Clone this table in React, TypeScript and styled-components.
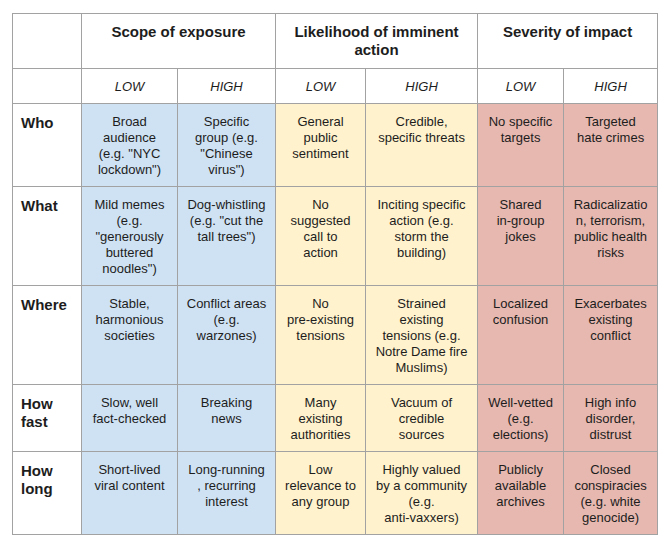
import React from "react";
import styled, { createGlobalStyle, css } from "styled-components";

const GlobalStyle = createGlobalStyle`
  html, body { margin: 0; padding: 0; background: #ffffff; }
  body { font-family: "Liberation Sans", Arial, Helvetica, sans-serif; color: #1d1d1d; }
`;

type Tone = "none" | "blue" | "yellow" | "red";

const toneBg: Record<Tone, string> = {
  none: "#ffffff",
  blue: "#cfe2f3",
  yellow: "#fff2cc",
  red: "#e6b8af",
};

const LINE = "#a2a2a2";

const Page = styled.main`
  padding: 13px 0 0 12px;
`;

const Table = styled.table`
  border-collapse: separate;
  border-spacing: 0;
  table-layout: fixed;
  width: 646px;
  border-top: 1px solid ${LINE};
  border-left: 1px solid ${LINE};
  font-family: "Liberation Sans", Arial, Helvetica, sans-serif;
  color: #1d1d1d;
`;

const Col = styled.col<{ $w: number }>`
  width: ${(p) => p.$w}px;
`;

const cellBase = css`
  box-sizing: border-box;
  border-right: 1px solid ${LINE};
  border-bottom: 1px solid ${LINE};
  vertical-align: top;
  overflow-wrap: break-word;
`;

const GroupHeader = styled.th`
  ${cellBase}
  padding: 9px 8.6px 9px;
  font-size: 15px;
  line-height: 18px;
  font-weight: bold;
  text-align: center;
  background: #ffffff;
`;

const EmptyHeader = styled.td`
  ${cellBase}
  padding: 10px 8px 8px;
  background: #ffffff;
`;

const LevelHeader = styled.th`
  ${cellBase}
  padding: 10px 8.6px 8px;
  font-size: 13px;
  line-height: 16px;
  font-weight: normal;
  font-style: italic;
  text-align: center;
  background: #ffffff;
`;

const RowLabel = styled.th`
  ${cellBase}
  padding: 10px 8px 8px;
  font-size: 15px;
  line-height: 18px;
  font-weight: bold;
  text-align: left;
  background: #ffffff;
`;

const Cell = styled.td<{ $tone: Tone }>`
  ${cellBase}
  padding: 10px 8.6px 8px;
  font-size: 13px;
  line-height: 16px;
  text-align: center;
  background: ${(p) => toneBg[p.$tone]};
`;

const NoBreak = styled.span`
  white-space: nowrap;
`;

const widths = [69, 96, 98, 90, 112, 86, 94];

const groups = [
  { title: "Scope of exposure", tone: "blue" as Tone },
  { title: "Likelihood of imminent action", tone: "yellow" as Tone },
  { title: "Severity of impact", tone: "red" as Tone },
];

const rows: { label: string; cells: string[] }[] = [
  {
    label: "Who",
    cells: [
      'Broad audience (e.g. "NYC lockdown")',
      'Specific group (e.g. "Chinese virus")',
      "General public sentiment",
      "Credible, specific threats",
      "No specific targets",
      "Targeted hate crimes",
    ],
  },
  {
    label: "What",
    cells: [
      'Mild memes (e.g. "generously buttered noodles")',
      'Dog-whistling (e.g. "cut the tall trees")',
      "No suggested call to action",
      "Inciting specific action (e.g. storm the building)",
      "Shared in-group jokes",
      "Radicalization, terrorism, public health risks",
    ],
  },
  {
    label: "Where",
    cells: [
      "Stable, harmonious societies",
      "Conflict areas (e.g. warzones)",
      "No pre-existing tensions",
      "Strained existing tensions (e.g. Notre Dame fire Muslims)",
      "Localized confusion",
      "Exacerbates existing conflict",
    ],
  },
  {
    label: "How fast",
    cells: [
      "Slow, well fact-checked",
      "Breaking news",
      "Many existing authorities",
      "Vacuum of credible sources",
      "Well-vetted (e.g. elections)",
      "High info disorder, distrust",
    ],
  },
  {
    label: "How long",
    cells: [
      "Short-lived viral content",
      "Long-running, recurring interest",
      "Low relevance to any group",
      "Highly valued by a community (e.g. anti-vaxxers)",
      "Publicly available archives",
      "Closed conspiracies (e.g. white genocide)",
    ],
  },
];

const toneFor = (i: number): Tone => groups[Math.floor(i / 2)].tone;

// Keep hyphenated words together (the original never breaks at a hyphen),
// leaving trailing punctuation outside so it may still wrap.
function renderText(text: string) {
  const parts = text.split(/(\s+)/);
  return parts.map((part, i) => {
    const m = part.match(/^([^\s]*\w-\w[^\s,)]*)([,)]*)$/);
    if (m) {
      return (
        <React.Fragment key={i}>
          <NoBreak>{m[1]}</NoBreak>
          {m[2]}
        </React.Fragment>
      );
    }
    return <React.Fragment key={i}>{part}</React.Fragment>;
  });
}

export default function App() {
  return (
    <Page>
      <GlobalStyle />
      <Table>
        <colgroup>
          {widths.map((w, i) => (
            <Col key={i} $w={w} />
          ))}
        </colgroup>
        <thead>
          <tr>
            <EmptyHeader />
            {groups.map((g) => (
              <GroupHeader key={g.title} colSpan={2} scope="colgroup">
                {g.title}
              </GroupHeader>
            ))}
          </tr>
          <tr>
            <EmptyHeader />
            {groups.map((g) => (
              <React.Fragment key={g.title}>
                <LevelHeader scope="col">LOW</LevelHeader>
                <LevelHeader scope="col">HIGH</LevelHeader>
              </React.Fragment>
            ))}
          </tr>
        </thead>
        <tbody>
          {rows.map((r) => (
            <tr key={r.label}>
              <RowLabel scope="row">{r.label}</RowLabel>
              {r.cells.map((c, i) => (
                <Cell key={i} $tone={toneFor(i)}>
                  {renderText(c)}
                </Cell>
              ))}
            </tr>
          ))}
        </tbody>
      </Table>
    </Page>
  );
}
